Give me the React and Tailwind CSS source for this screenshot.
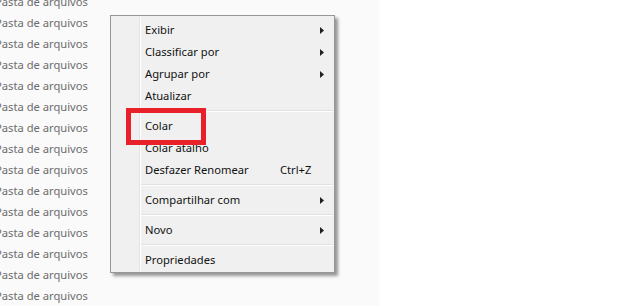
import React from "react";

const font = { fontFamily: '"Noto Sans", "Open Sans", sans-serif' };

function Arrow() {
  return (
    <svg width="4" height="7" viewBox="0 0 4 7" className="absolute right-[10px] top-[8px]">
      <path d="M0 0 L4 3.5 L0 7 Z" fill="#222" />
    </svg>
  );
}

function Item({ label, sub, shortcut }) {
  return (
    <div className="relative h-[22px] flex items-center pl-[34px] text-[11.2px] text-[#111]">
      <span className="leading-[22px]">{label}</span>
      {shortcut && <span className="absolute left-[169px] leading-[22px]">{shortcut}</span>}
      {sub && <Arrow />}
    </div>
  );
}

function Sep() {
  return (
    <div className="h-[8px] flex items-center pl-[30px] pr-[1px]">
      <div className="w-full h-[2px] border-t border-[#e0e0e0] border-b border-b-white" />
    </div>
  );
}

export default function App() {
  const rows = Array.from({ length: 15 });
  return (
    <div className="relative w-[626px] h-[306px] flex bg-white overflow-hidden" style={font}>
      <div className="w-[379px] h-full bg-[#fafafa] flex flex-col">
        <div className="-mt-[9px] -ml-[5px] flex flex-col">
          {rows.map((_, i) => (
            <div key={i} className="h-[21px] leading-[21px] text-[11.2px] text-[#6d6d6d] whitespace-nowrap">
              Pasta de arquivos
            </div>
          ))}
        </div>
      </div>
      <div className="flex-1" />

      <div className="absolute left-[110px] top-[15px] w-[225px] h-[258px] bg-[#f0f0f0] border border-[#979797] shadow-[3px_3px_3px_rgba(0,0,0,0.4)] pt-[3px]">
        <div className="absolute left-[28px] top-[1px] bottom-[1px] w-[2px] border-l border-[#e2e3e3] border-r border-r-white" />
        <div className="relative flex flex-col">
          <Item label="Exibir" sub />
          <Item label="Classificar por" sub />
          <Item label="Agrupar por" sub />
          <Item label="Atualizar" />
          <Sep />
          <Item label="Colar" />
          <Item label="Colar atalho" />
          <Item label="Desfazer Renomear" shortcut="Ctrl+Z" />
          <Sep />
          <Item label="Compartilhar com" sub />
          <Sep />
          <Item label="Novo" sub />
          <Sep />
          <Item label="Propriedades" />
        </div>
        <div className="absolute left-[15px] top-[92px] w-[80px] h-[37px] border-[5px] border-[#e8202a]" />
      </div>
    </div>
  );
}
